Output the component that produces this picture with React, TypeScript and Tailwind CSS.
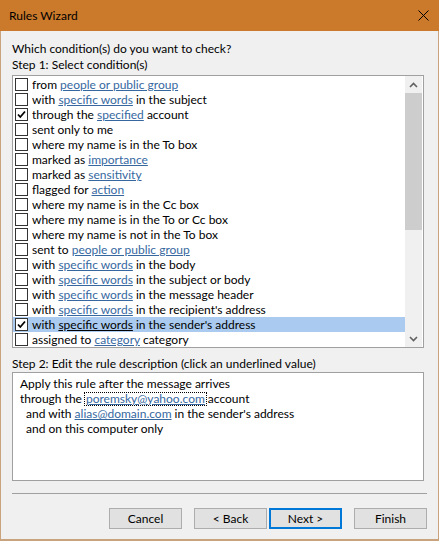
const conditions = [
  { pre: "from ", link: "people or public group", post: "" },
  { pre: "with ", link: "specific words", post: " in the subject" },
  { pre: "through the ", link: "specified", post: " account", checked: true },
  { pre: "sent only to me" },
  { pre: "where my name is in the To box" },
  { pre: "marked as ", link: "importance", post: "" },
  { pre: "marked as ", link: "sensitivity", post: "" },
  { pre: "flagged for ", link: "action", post: "" },
  { pre: "where my name is in the Cc box" },
  { pre: "where my name is in the To or Cc box" },
  { pre: "where my name is not in the To box" },
  { pre: "sent to ", link: "people or public group", post: "" },
  { pre: "with ", link: "specific words", post: " in the body" },
  { pre: "with ", link: "specific words", post: " in the subject or body" },
  { pre: "with ", link: "specific words", post: " in the message header" },
  { pre: "with ", link: "specific words", post: " in the recipient's address" },
  { pre: "with ", link: "specific words", post: " in the sender's address", checked: true, selected: true },
  { pre: "assigned to ", link: "category", post: " category" },
];

const CheckBox = ({ checked }: { checked?: boolean }) => (
  <div className="w-[13px] h-[13px] shrink-0 border border-[#333333] bg-white flex items-center justify-center">
    {checked && (
      <svg width="11" height="11" viewBox="0 0 11 11">
        <path d="M2 5.5 L4.3 8 L9 2.5" fill="none" stroke="#000" strokeWidth="1.8" />
      </svg>
    )}
  </div>
);

const Chevron = ({ up }: { up?: boolean }) => (
  <svg width="9" height="6" viewBox="0 0 9 6">
    <path d={up ? "M1 5 L4.5 1.5 L8 5" : "M1 1 L4.5 4.5 L8 1"} fill="none" stroke="#606060" strokeWidth="1.6" />
  </svg>
);

const Button = ({ label, focused }: { label: string; focused?: boolean }) => (
  <div
    className={
      "w-[73px] h-[21px] flex items-center justify-center bg-[#e1e1e1] text-[12px] text-black " +
      (focused ? "border-2 border-[#0078d7]" : "border border-[#adadad]")
    }
  >
    {label}
  </div>
);

export default function App() {
  return (
    <div
      className="w-[439px] h-[541px] flex flex-col bg-[#f0f0f0] text-black text-[12px]"
      style={{ fontFamily: 'Lato, "Noto Sans", sans-serif' }}
    >
      {/* Title bar */}
      <div className="h-[31px] shrink-0 bg-[#cb7a2c] flex items-center justify-between pl-[9px] pr-[10px]">
        <span className="text-[12px] text-black">Rules Wizard</span>
        <svg width="11" height="11" viewBox="0 0 11 11">
          <path d="M0.5 0.5 L10.5 10.5 M10.5 0.5 L0.5 10.5" stroke="#000" strokeWidth="1" />
        </svg>
      </div>

      <div className="flex-1 flex flex-col border-l border-r border-b-2 border-[#c9a27e] pl-[11px] pr-[14px]">
        <div className="mt-[10px] h-[15px] leading-[15px]">Which condition(s) do you want to check?</div>
        <div className="mt-[1px] h-[15px] leading-[15px]">Step 1: Select condition(s)</div>

        {/* Condition list */}
        <div className="mt-[3px] h-[273px] border border-[#a0a0a0] bg-white flex">
          <div className="flex-1 pt-[1px]">
            {conditions.map((c, i) => (
              <div
                key={i}
                className={"h-[15px] flex items-center pl-[2px] " + (c.selected ? "bg-[#aacbef]" : "")}
              >
                <CheckBox checked={c.checked} />
                <span className="ml-[4px] leading-[15px] whitespace-nowrap">
                  {c.pre}
                  {c.link && (
                    <span className={"underline " + (c.selected ? "text-black" : "text-[#36689f]")}>{c.link}</span>
                  )}
                  {c.post}
                </span>
              </div>
            ))}
          </div>
          <div className="w-[17px] bg-[#f0f0f0] flex flex-col mr-[1px]">
            <div className="h-[17px] flex items-center justify-center">
              <Chevron up />
            </div>
            <div className="h-[137px] bg-[#cdcdcd]" />
            <div className="flex-1" />
            <div className="h-[17px] flex items-center justify-center">
              <Chevron />
            </div>
          </div>
        </div>

        <div className="mt-[8px] h-[15px] leading-[15px]">Step 2: Edit the rule description (click an underlined value)</div>

        {/* Rule description */}
        <div className="mt-[1px] h-[109px] border border-[#a0a0a0] bg-white pl-[7px] pt-[3px]">
          <div className="h-[15px] leading-[15px]">Apply this rule after the message arrives</div>
          <div className="h-[15px] leading-[15px] flex items-center whitespace-nowrap">
            <span>through the</span>
            <span className="ml-[2px] border border-dotted border-black px-[1px] leading-[12px] text-[#36689f] underline">
              poremsky@yahoo.com
            </span>
            <span className="ml-[1px]">account</span>
          </div>
          <div className="h-[15px] leading-[15px] pl-[6px]">
            and with <span className="text-[#36689f] underline">alias@domain.com</span> in the sender's address
          </div>
          <div className="h-[15px] leading-[15px] pl-[6px]">and on this computer only</div>
        </div>

        <div className="mt-[12px] h-px bg-[#a0a0a0] mr-[-3px]" />

        {/* Buttons */}
        <div className="mt-[14px] flex justify-end mr-[-3px]">
          <Button label="Cancel" />
          <div className="w-[12px]" />
          <Button label="< Back" />
          <div className="w-[2px]" />
          <Button label="Next >" focused />
          <div className="w-[12px]" />
          <Button label="Finish" />
        </div>
      </div>
    </div>
  );
}
